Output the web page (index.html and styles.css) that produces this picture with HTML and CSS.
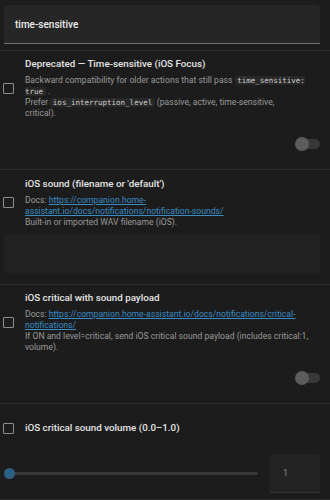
FILE: index.html
```html
<!DOCTYPE html>
<html lang="en">
<head>
  <meta charset="UTF-8" />
  <meta name="viewport" content="width=device-width, initial-scale=1" />
  <title>Notification options</title>
  <link rel="stylesheet" href="styles.css">
</head>
<body>
  <div class="search">time-sensitive</div>

  <div class="item">
    <div class="row">
      <span class="check"></span>
      <div class="text">
        <div class="title">Deprecated — Time-sensitive (iOS Focus)</div>
        <div class="desc">Backward compatibility for older actions that still pass <code>time_sensitive: true</code> .<br>Prefer <code>ios_interruption_level</code> (passive, active, time-sensitive,<br>critical).</div>
      </div>
    </div>
    <div class="toggle-line"><span class="toggle"><span class="knob"></span></span></div>
  </div>

  <div class="item item-sound">
    <div class="row">
      <span class="check"></span>
      <div class="text">
        <div class="title">iOS sound (filename or 'default')</div>
        <div class="desc">Docs: <a href="#">https://companion.home-assistant.io/docs/notifications/notification-sounds/</a><br>Built-in or imported WAV filename (iOS).</div>
      </div>
    </div>
    <div class="field"></div>
  </div>

  <div class="item">
    <div class="row">
      <span class="check"></span>
      <div class="text">
        <div class="title">iOS critical with sound payload</div>
        <div class="desc">Docs: <a href="#">https://companion.home-assistant.io/docs/notifications/critical-notifications/</a><br>If ON and level=critical, send iOS critical sound payload (includes critical:1, volume).</div>
      </div>
    </div>
    <div class="toggle-line"><span class="toggle"><span class="knob"></span></span></div>
  </div>

  <div class="item item-volume">
    <div class="row">
      <span class="check"></span>
      <div class="text">
        <div class="title">iOS critical sound volume (0.0–1.0)</div>
      </div>
    </div>
    <div class="slider-line">
      <div class="slider"><span class="thumb"></span></div>
      <div class="number">1</div>
    </div>
  </div>

  <div class="item item-last"></div>
</body>
</html>
```

FILE: styles.css
```css
body {
  margin: 0;
  background: #1c1c1c;
  font-family: Roboto, "Noto Sans", sans-serif;
  color: #e1e1e1;
}

.search {
  margin: 5px 10px 0 4px;
  height: 38px;
  padding-left: 11px;
  display: flex;
  align-items: center;
  background: #262626;
  border-bottom: 1px solid #6e6e6e;
  border-radius: 4px 4px 0 0;
  font-size: 10px;
  font-weight: 500;
  color: #ececec;
}

.item {
  margin-top: 6px;
  border-top: 1px solid #2d2d2d;
  padding: 6px 10px 18px 0;
}

.row {
  display: flex;
  align-items: center;
  gap: 11px;
}

.check {
  flex: none;
  width: 9px;
  height: 9px;
  margin-left: 3px;
  border: 1.5px solid #8e8e8e;
  border-radius: 1px;
}

.text {
  flex: 1;
  min-width: 0;
  padding-right: 11.5px;
}

.title {
  font-size: 9.8px;
  line-height: 14px;
  font-weight: 500;
  color: #e6e6e6;
}

.desc {
  margin-top: 4px;
  font-size: 8.62px;
  line-height: 11px;
  color: #9a9a9a;
}

.desc a {
  color: #3a8cc4;
}

code {
  font-family: "DejaVu Sans Mono", monospace;
  font-size: 7.5px;
  line-height: 1;
  color: #cfcfcf;
  background: #282828;
  padding: 0 2.5px;
  border-radius: 3px;
}

.toggle-line {
  display: flex;
  justify-content: flex-end;
  align-items: center;
  height: 14px;
  margin-top: 18px;
}

.toggle {
  position: relative;
  width: 23px;
  height: 10px;
  border-radius: 5px;
  background: #383838;
}

.toggle .knob {
  position: absolute;
  left: -2px;
  top: -2px;
  width: 14px;
  height: 14px;
  border-radius: 50%;
  background: #5c5c5c;
}

.item-sound {
  margin-top: 0;
  padding-top: 7px;
  padding-bottom: 5px;
}

.field {
  margin: 6px 0 0 4px;
  height: 39px;
  background: #212121;
}

.item-volume {
  margin-top: 0;
  padding-top: 17px;
  padding-bottom: 6px;
}

.item-last {
  margin-top: 0;
  padding: 0;
}

.slider-line {
  display: flex;
  align-items: center;
  gap: 12px;
  margin-top: 19px;
}

.slider {
  position: relative;
  flex: 1;
  height: 3px;
  margin-left: 9px;
  background: #383838;
  border-radius: 2px;
}

.slider .thumb {
  position: absolute;
  left: -5.5px;
  top: -4px;
  width: 11px;
  height: 11px;
  border-radius: 50%;
  background: #2c6185;
}

.number {
  width: 37px;
  height: 38px;
  padding-left: 13px;
  display: flex;
  align-items: center;
  background: #232323;
  border-bottom: 1px solid #333;
  border-radius: 4px 4px 0 0;
  font-size: 9px;
  color: #8a8a8a;
}
```
